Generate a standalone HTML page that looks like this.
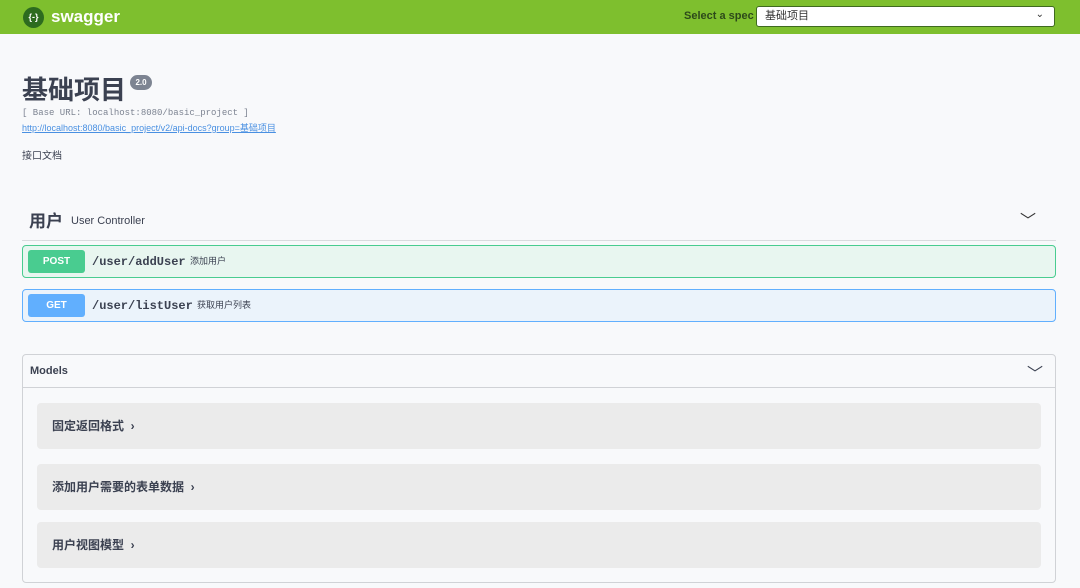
<!DOCTYPE html><html><head><meta charset="utf-8"><style>
*{box-sizing:border-box;margin:0;padding:0}
body{width:1080px;height:588px;overflow:hidden;background:#f8f9fb;font-family:"Liberation Sans","Noto Sans CJK SC",sans-serif;color:#3b4151;position:relative}
.top{position:absolute;left:0;top:0;width:1080px;height:34px;background:#7ebf2e}
.abs{position:absolute;line-height:1.2}
.mono{font-family:"Liberation Mono","Noto Sans CJK SC",monospace}
.op{position:absolute;left:22px;width:1034px;height:33px;border-radius:4px}
.badge{position:absolute;left:5px;top:4px;width:57px;height:23px;border-radius:3px;color:#fff;font-weight:bold;font-size:10px;text-align:center;line-height:23px}
.mb{position:absolute;left:37px;width:1004px;height:46px;background:#ebebeb;border-radius:4px;font-size:12px;font-weight:bold;padding-left:15px;line-height:46px}
</style></head><body>
<div class="top">
<div class="abs" style="left:23px;top:7px;width:21px;height:21px;border-radius:50%;background:#2d6b1f;color:#fff;font-size:9px;text-align:center;line-height:21px;font-weight:bold">{-}</div>
<div class="abs" style="left:51px;top:7px;color:#fff;font-weight:bold;font-size:17px">swagger</div>
<div class="abs" style="left:684px;top:10px;font-size:11px;font-weight:bold;color:#2d4a1a">Select a spec</div>
<div class="abs" style="left:756px;top:6px;width:299px;height:21px;background:#fff;border:1px solid #3f6a20;border-radius:3px;font-size:11px;padding:3px 0 0 8px;color:#333">基础项目<span style="position:absolute;right:10px;top:2px;font-size:10px">⌄</span></div>
</div>
<div class="abs" style="left:22px;top:75px;font-size:26px;font-weight:bold;color:#3b4151">基础项目</div>
<div class="abs" style="left:130px;top:75px;width:22px;height:15px;border-radius:8px;background:#7d8492;color:#fff;font-size:8px;text-align:center;line-height:15px;font-weight:bold">2.0</div>
<div class="abs mono" style="left:22px;top:108px;font-size:9px;color:#7d8492">[ Base URL: localhost:8080/basic_project ]</div>
<div class="abs" style="left:22px;top:123px;font-size:9px;color:#4990e2;text-decoration:underline">http://localhost:8080/basic_project/v2/api-docs?group=基础项目</div>
<div class="abs" style="left:22px;top:151px;font-size:10px">接口文档</div>
<div class="abs" style="left:29px;top:212px;font-size:17px;font-weight:bold">用户</div>
<div class="abs" style="left:71px;top:215px;font-size:11px">User Controller</div>
<div class="abs" style="left:1020px;top:212px;font-size:16px;color:#333">﹀</div>
<div class="abs" style="left:22px;top:240px;width:1034px;height:1px;background:#d9dbde"></div>
<div class="op" style="top:245px;background:#e8f6f0;border:1px solid #49cc90"><div class="badge" style="background:#49cc90">POST</div><div class="abs mono" style="left:69px;top:9px;font-size:12px;font-weight:bold">/user/addUser</div><div class="abs" style="left:167px;top:10px;font-size:9px">添加用户</div></div>
<div class="op" style="top:289px;background:#ebf3fb;border:1px solid #61affe"><div class="badge" style="background:#61affe">GET</div><div class="abs mono" style="left:69px;top:9px;font-size:12px;font-weight:bold">/user/listUser</div><div class="abs" style="left:174px;top:10px;font-size:9px">获取用户列表</div></div>
<div class="abs" style="left:22px;top:354px;width:1034px;height:229px;border:1px solid #d0d2d6;border-radius:4px">
<div class="abs" style="left:7px;top:10px;font-size:11px;font-weight:bold">Models</div>
<div class="abs" style="left:1004px;top:10px;font-size:16px">﹀</div>
<div class="abs" style="left:0;top:32px;width:1032px;height:1px;background:#d0d2d6"></div>
</div>
<div class="mb" style="top:403px">固定返回格式 &nbsp;›</div>
<div class="mb" style="top:464px">添加用户需要的表单数据 &nbsp;›</div>
<div class="mb" style="top:522px">用户视图模型 &nbsp;›</div>
</body></html>
